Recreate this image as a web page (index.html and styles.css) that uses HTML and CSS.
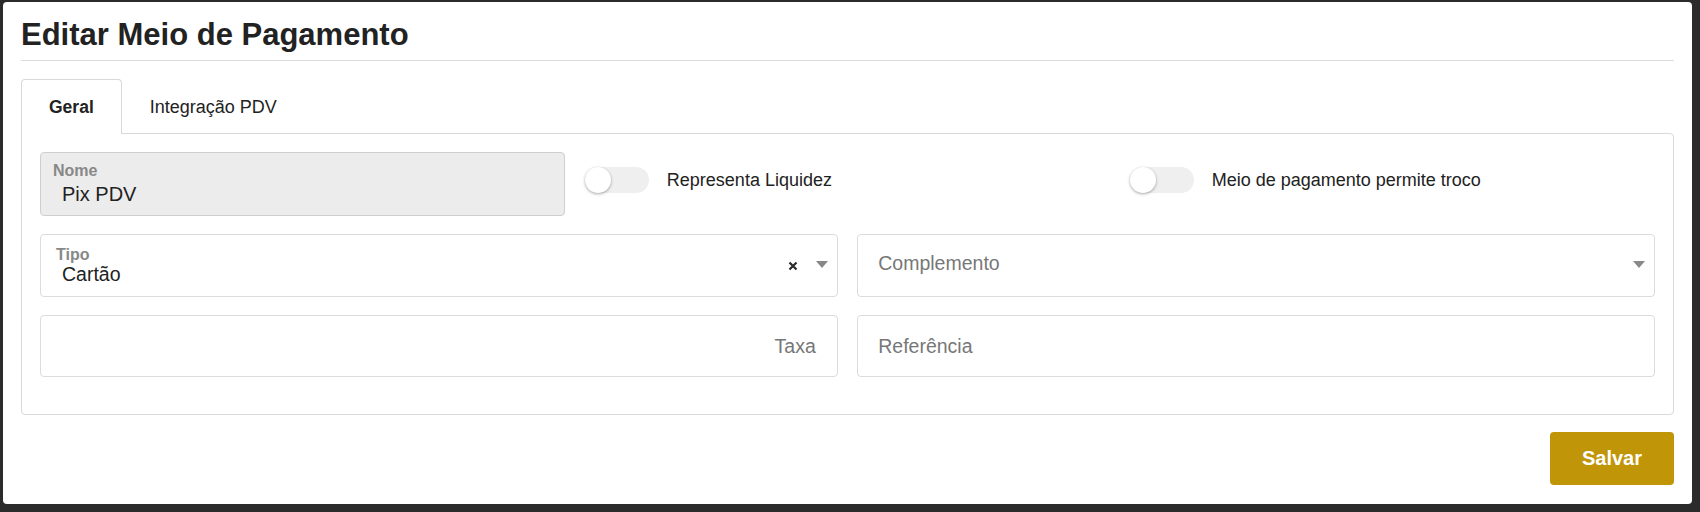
FILE: index.html
```html
<!DOCTYPE html>
<html lang="pt-BR">
<head>
<meta charset="utf-8">
<title>Editar Meio de Pagamento</title>
<link rel="stylesheet" href="styles.css">
</head>
<body>
<div class="modal">
  <h1 class="modal-title">Editar Meio de Pagamento</h1>
  <div class="tabs">
    <div class="tab tab--active">Geral</div>
    <div class="tab">Integração PDV</div>
  </div>
  <div class="tab-content">
    <div class="row row--3">
      <div class="field field--readonly">
        <span class="field-label">Nome</span>
        <span class="field-value">Pix PDV</span>
      </div>
      <div class="switch-item">
        <span class="switch"><span class="switch-knob"></span></span>
        <span class="switch-text">Representa Liquidez</span>
      </div>
      <div class="switch-item">
        <span class="switch"><span class="switch-knob"></span></span>
        <span class="switch-text">Meio de pagamento permite troco</span>
      </div>
    </div>
    <div class="row row--2">
      <div class="field field--select">
        <div class="select-main">
          <span class="field-label field-label--tipo">Tipo</span>
          <span class="select-value">Cartão</span>
        </div>
        <svg class="clear-icon" width="10" height="10" viewBox="0 0 10 10"><path d="M1.5 1.5 L8.5 8.5 M8.5 1.5 L1.5 8.5" stroke="#2a2a2a" stroke-width="2.2" stroke-linecap="butt"/></svg>
        <span class="caret"></span>
      </div>
      <div class="field field--select">
        <div class="select-main">
          <span class="placeholder">Complemento</span>
        </div>
        <span class="caret"></span>
      </div>
    </div>
    <div class="row row--2">
      <div class="field field--input field--right">
        <span class="placeholder">Taxa</span>
      </div>
      <div class="field field--input">
        <span class="placeholder">Referência</span>
      </div>
    </div>
  </div>
  <div class="modal-footer">
    <button class="btn-save">Salvar</button>
  </div>
</div>
</body>
</html>
```

FILE: styles.css
```css
* { box-sizing: border-box; }

html, body {
  margin: 0;
  padding: 0;
  background: #2b2b2b;
  font-family: "Liberation Sans", Arial, sans-serif;
  color: #222;
}

.modal {
  width: 1689px;
  height: 502px;
  margin: 2px 0 0 3px;
  background: #fff;
  border-radius: 4px;
  padding: 16px 18px 0 18px;
}

.modal-title {
  margin: 0;
  font-size: 31px;
  line-height: 34px;
  font-weight: 700;
  color: #222;
  padding: 0 0 8px 0;
  border-bottom: 1px solid #dcdcdc;
}

.tabs {
  display: flex;
  margin-top: 18px;
}

.tab {
  height: 55px;
  padding: 0 27px;
  display: flex;
  align-items: center;
  font-size: 18px;
  color: #222;
  border: 1px solid transparent;
  border-bottom: none;
  margin-bottom: -1px;
}

.tab--active {
  font-weight: 700;
  font-size: 17.5px;
  background: #fff;
  border-color: #d9d9d9;
  border-radius: 4px 4px 0 0;
  position: relative;
  z-index: 1;
}

.tab-content {
  border: 1px solid #d9d9d9;
  border-radius: 0 4px 4px 4px;
  padding: 18px 18px 37px 18px;
  display: flex;
  flex-direction: column;
  gap: 18px;
}

.row {
  display: grid;
  column-gap: 19.5px;
}

.row--3 { grid-template-columns: 1fr 1fr 1fr; }
.row--2 { grid-template-columns: 1fr 1fr; }

.field {
  border: 1px solid #dcdcdc;
  border-radius: 4px;
  height: 63px;
  background: #fff;
}

.field--readonly {
  height: 64px;
  background: #ececec;
  border-color: #cfcfcf;
  padding: 9px 0 0 12px;
  display: flex;
  flex-direction: column;
}

.field-label {
  font-size: 16px;
  line-height: 18px;
  font-weight: 700;
  color: #888;
}

.field-value {
  margin-top: 2px;
  padding-left: 9px;
  font-size: 20px;
  line-height: 24px;
  color: #222;
}

.field--select {
  display: flex;
  align-items: center;
  padding: 0 9px 0 0;
}

.select-main {
  flex: 1;
  display: flex;
  flex-direction: column;
}

.field-label--tipo {
  padding-left: 15px;
  margin-top: -2px;
}

.select-value {
  padding-left: 21px;
  font-size: 19.5px;
  line-height: 20px;
  color: #222;
}

.placeholder {
  font-size: 19.5px;
  line-height: 24px;
  color: #777;
}

.select-main .placeholder {
  padding-left: 20px;
  margin-top: -6px;
}

.clear-icon {
  margin-right: 18px;
}

.caret {
  width: 0;
  height: 0;
  border-left: 6px solid transparent;
  border-right: 6px solid transparent;
  border-top: 7px solid #888;
  margin-top: -2px;
}

.field--input {
  display: flex;
  align-items: center;
  height: 62px;
  padding: 0 20px;
}

.field--right {
  justify-content: flex-end;
  padding-right: 21px;
}

.switch-item {
  display: flex;
  align-items: center;
  gap: 18px;
  padding-top: 15px;
  align-self: start;
}

.switch {
  width: 64px;
  height: 26px;
  border-radius: 13px;
  background: #efefef;
  display: flex;
  align-items: center;
  flex-shrink: 0;
}

.switch-knob {
  width: 26px;
  height: 26px;
  border-radius: 50%;
  background: #fff;
  box-shadow: 0 1px 3px rgba(0, 0, 0, 0.35);
}

.switch-text {
  font-size: 18px;
  line-height: 22px;
  color: #222;
}

.modal-footer {
  display: flex;
  justify-content: flex-end;
  margin-top: 17px;
}

.btn-save {
  width: 124px;
  height: 53px;
  border: none;
  border-radius: 4px;
  background: #c09508;
  color: #fff;
  font-family: "Liberation Sans", Arial, sans-serif;
  font-size: 20px;
  font-weight: 700;
  cursor: pointer;
}
```
